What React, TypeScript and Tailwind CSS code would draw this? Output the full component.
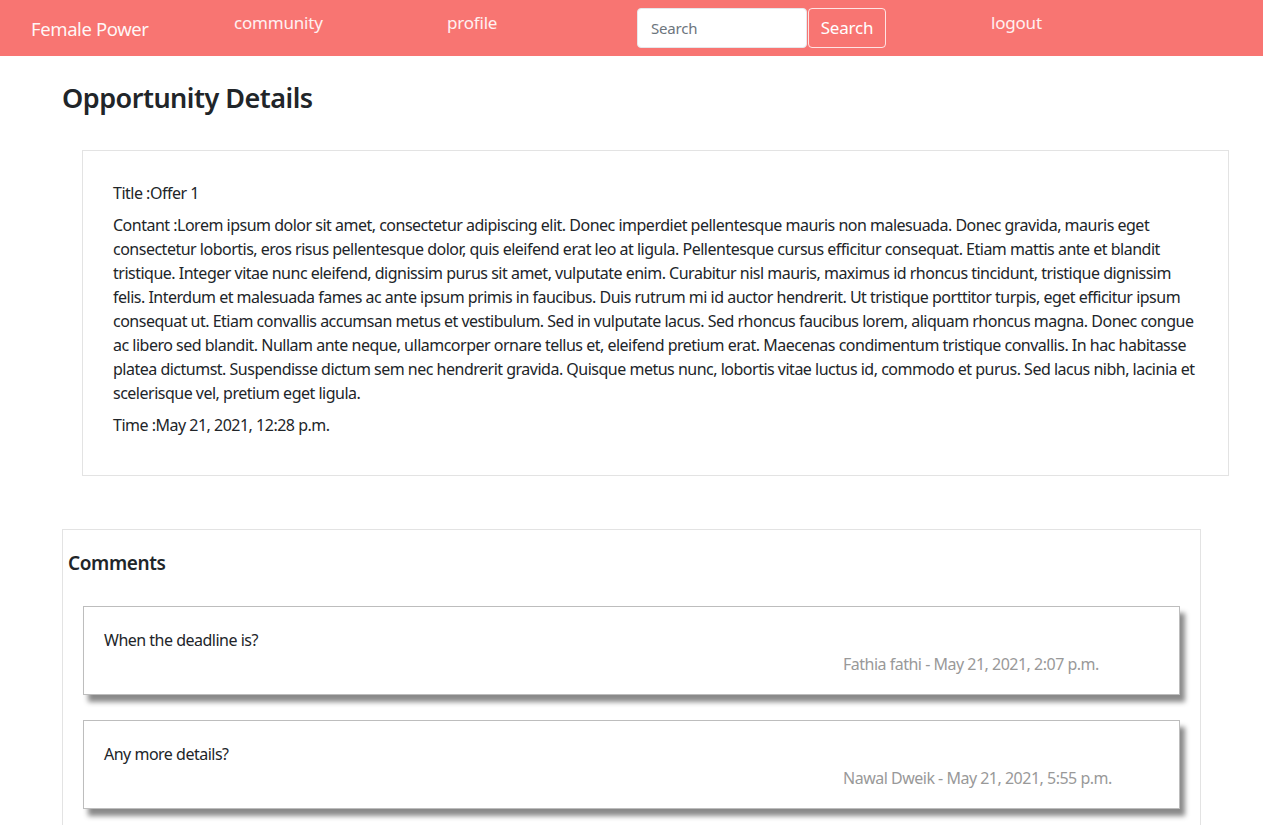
import React from "react";

const lines = [
  "Contant :Lorem ipsum dolor sit amet, consectetur adipiscing elit. Donec imperdiet pellentesque mauris non malesuada. Donec gravida, mauris eget",
  "consectetur lobortis, eros risus pellentesque dolor, quis eleifend erat leo at ligula. Pellentesque cursus efficitur consequat. Etiam mattis ante et blandit",
  "tristique. Integer vitae nunc eleifend, dignissim purus sit amet, vulputate enim. Curabitur nisl mauris, maximus id rhoncus tincidunt, tristique dignissim",
  "felis. Interdum et malesuada fames ac ante ipsum primis in faucibus. Duis rutrum mi id auctor hendrerit. Ut tristique porttitor turpis, eget efficitur ipsum",
  "consequat ut. Etiam convallis accumsan metus et vestibulum. Sed in vulputate lacus. Sed rhoncus faucibus lorem, aliquam rhoncus magna. Donec congue",
  "ac libero sed blandit. Nullam ante neque, ullamcorper ornare tellus et, eleifend pretium erat. Maecenas condimentum tristique convallis. In hac habitasse",
  "platea dictumst. Suspendisse dictum sem nec hendrerit gravida. Quisque metus nunc, lobortis vitae luctus id, commodo et purus. Sed lacus nibh, lacinia et",
  "scelerisque vel, pretium eget ligula.",
];

const comments = [
  { text: "When the deadline is?", meta: "Fathia fathi - May 21, 2021, 2:07 p.m." },
  { text: "Any more details?", meta: "Nawal Dweik - May 21, 2021, 5:55 p.m." },
];

export default function App() {
  return (
    <div
      className="min-h-[825px] bg-white text-[#212529] text-[16px] leading-[24px] tracking-[-0.5px]"
      style={{ fontFamily: '"Noto Sans", "Open Sans", sans-serif' }}
    >
      <nav className="h-14 bg-[#f87572] flex items-center tracking-[-0.2px]">
        <div className="w-[234px] pl-[31px] text-[18.5px] tracking-[-0.4px] text-white/95 pt-[2px]">Female Power</div>
        <div className="w-[213px] text-[17px] text-white/90 self-start pt-[11px]">community</div>
        <div className="w-[190px] text-[17px] text-white/90 self-start pt-[11px]">profile</div>
        <div className="flex items-center">
          <div className="w-[170px] h-[40px] bg-white rounded-[4px] border border-[#e5e7eb] flex items-center pl-[13px] text-[15px] text-[#6c757d]">
            Search
          </div>
          <div className="ml-[1px] w-[78px] h-[40px] rounded-[4px] border border-white/80 flex items-center justify-center text-[17px] text-white">
            Search
          </div>
        </div>
        <div className="ml-[105px] text-[17px] text-white/90 self-start pt-[11px]">logout</div>
      </nav>

      <main className="pl-[62px]">
        <h3 className="mt-[25px] text-[27px] leading-[34px] font-semibold text-[#212529] tracking-[-0.5px]">
          Opportunity Details
        </h3>

        <div className="mt-[35px] ml-[20px] w-[1147px] border border-[#e3e3e3] px-[30px] pt-[30px] pb-[30px]">
          <p className="mb-[8px]">Title :Offer 1</p>
          <p className="mb-[8px]">
            {lines.map((l, i) => (
              <span key={i} className="block whitespace-nowrap">
                {l}
              </span>
            ))}
          </p>
          <p className="mb-[8px]">Time :May 21, 2021, 12:28 p.m.</p>
        </div>

        <div className="mt-[53px] w-[1139px] border border-[#e3e3e3] pl-[5px] pt-[21px] pb-[20px]">
          <h5 className="text-[19px] leading-[24px] font-semibold text-[#212529] tracking-[-0.4px]">Comments</h5>
          <div className="mt-[31px] ml-[15px] w-[1097px] flex flex-col gap-[25px]">
            {comments.map((c, i) => (
              <div
                key={i}
                className="h-[89px] bg-white border border-[#bdbdbd] px-[20px] pt-[21px] shadow-[5px_7px_5px_#8a8a8a]"
              >
                <p>{c.text}</p>
                <p className="pl-[739px] text-[#999999] whitespace-nowrap">{c.meta}</p>
              </div>
            ))}
          </div>
        </div>
      </main>
    </div>
  );
}
